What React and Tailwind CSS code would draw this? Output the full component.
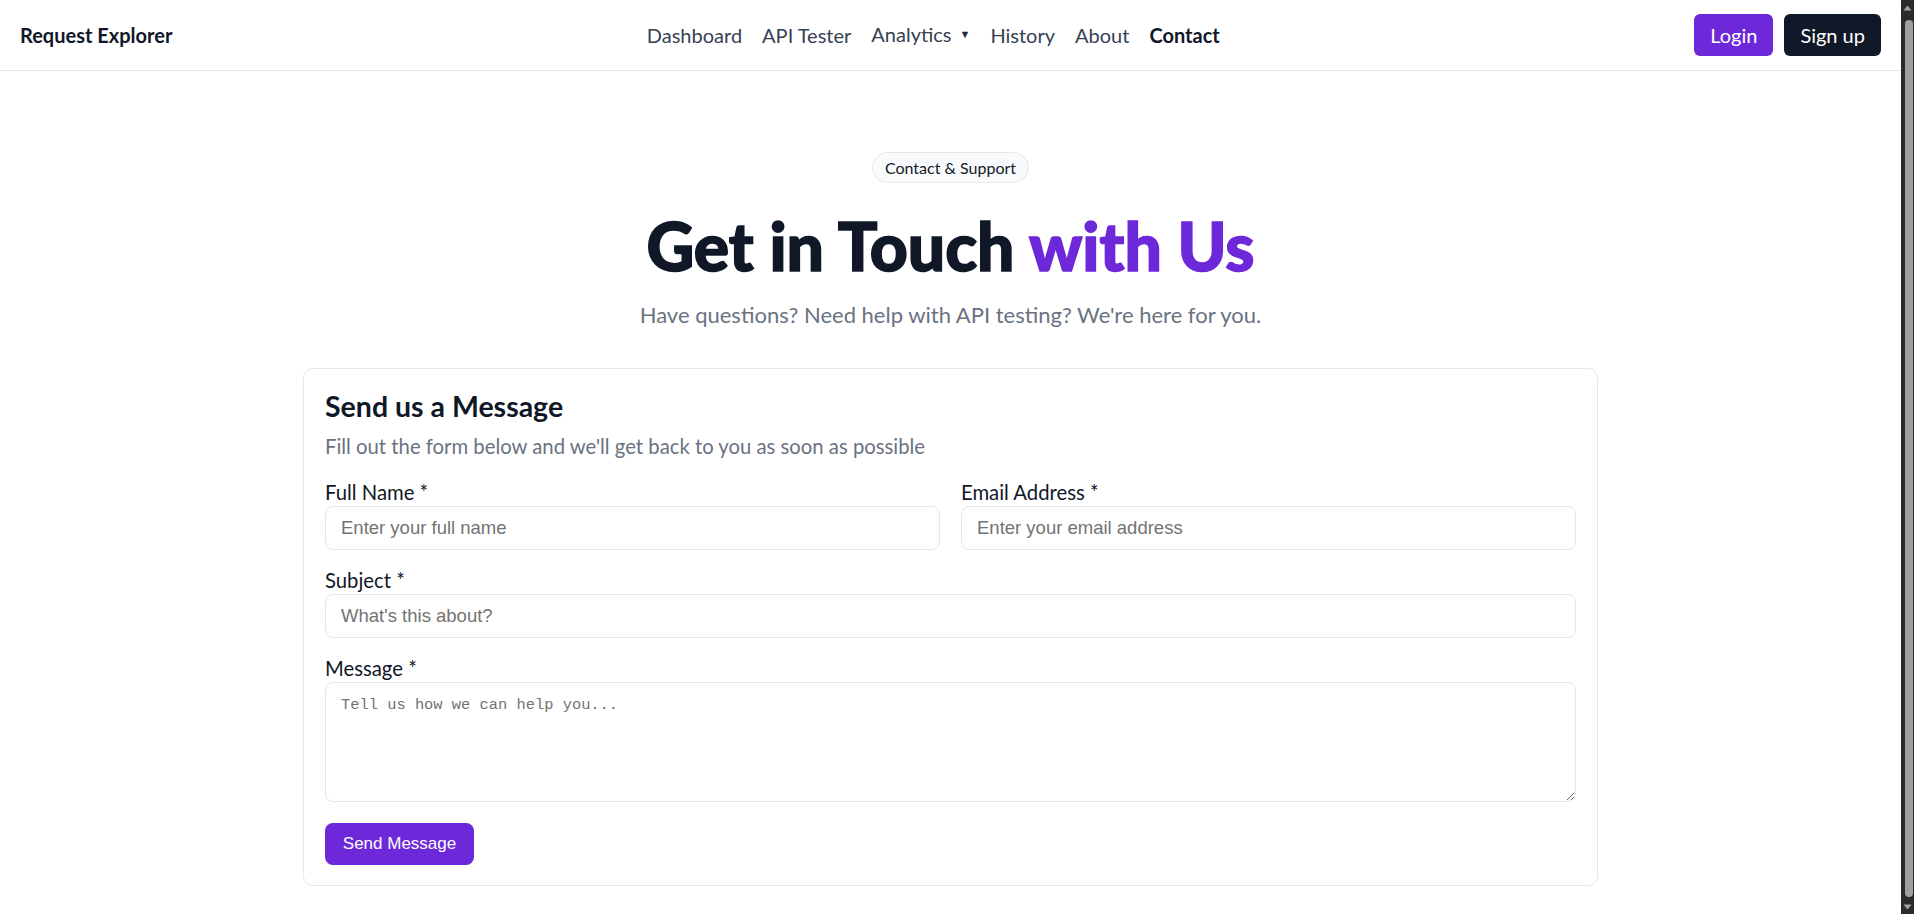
import React from "react";

const sans = { fontFamily: "Lato, 'Open Sans', sans-serif" };

function ScrollStrip() {
  return (
    <div className="w-[13px] shrink-0 h-screen bg-[#2b2b2b] flex flex-col items-center">
      <div className="h-[16px] w-full flex items-center justify-center">
        <svg width="9" height="6" viewBox="0 0 9 6">
          <path d="M4.5 0.5 L8.5 5.5 L0.5 5.5 Z" fill="#a3a3a3" />
        </svg>
      </div>
      <div className="mt-[4px] ml-[3px] w-[8px] h-[877px] rounded-[4px] bg-[#9f9f9f]" />
      <div className="mt-auto h-[14px] w-full flex items-center justify-center">
        <svg width="9" height="6" viewBox="0 0 9 6">
          <path d="M0.5 0.5 L8.5 0.5 L4.5 5.5 Z" fill="#a3a3a3" />
        </svg>
      </div>
    </div>
  );
}

const inputCls =
  "mt-px h-[44px] rounded-lg border border-gray-200 px-[15px] font-['Liberation_Sans',Arial,sans-serif] text-[18.5px] text-gray-900 placeholder:text-[#737373] outline-none";

export default function App() {
  return (
    <div className="flex h-screen overflow-hidden bg-white text-gray-900" style={sans}>
      <div className="flex-1 min-w-0 h-screen overflow-hidden">
        <nav className="h-[71px] border-b border-gray-200 px-5 flex items-center justify-between">
          <div className="font-bold text-[20px] text-gray-900">Request Explorer</div>
          <div className="flex items-center gap-5 text-[20px] text-gray-700">
            <a className="cursor-pointer">Dashboard</a>
            <a className="cursor-pointer">API Tester</a>
            <a className="cursor-pointer flex items-center gap-[8px] -mt-[2px]">
              Analytics
              <span className="text-[11px] text-gray-800">▼</span>
            </a>
            <a className="cursor-pointer">History</a>
            <a className="cursor-pointer">About</a>
            <a className="cursor-pointer font-bold text-gray-900">Contact</a>
          </div>
          <div className="flex items-center gap-[11px]">
            <button className="h-[42px] px-4 rounded-md bg-[#6d28d9] text-white text-[20px]">
              Login
            </button>
            <button className="h-[42px] px-4 rounded-md bg-[#111827] text-white text-[20px]">
              Sign up
            </button>
          </div>
        </nav>

        <main className="flex flex-col items-center pt-[81px] pb-10">
          <div className="h-[31px] px-3 flex items-center rounded-full border border-gray-200 bg-gray-50 text-[16px] text-gray-900">
            Contact &amp; Support
          </div>
          <h1 className="mt-[30px] text-[66px] leading-none font-black text-gray-900 [-webkit-text-stroke-width:1.5px]">
            Get in Touch <span className="text-[#6d28d9]">with Us</span>
          </h1>
          <p className="mt-[20px] text-[22px] leading-[31px] text-gray-500">
            Have questions? Need help with API testing? We're here for you.
          </p>

          <div className="mt-[38px] w-[1295px] rounded-[10px] border border-gray-200 px-[21px] pt-5 pb-5">
            <h2 className="text-[28.5px] leading-[35px] font-bold text-gray-900">Send us a Message</h2>
            <p className="mt-[7px] text-[20.3px] leading-[31px] text-gray-500">
              Fill out the form below and we'll get back to you as soon as possible
            </p>

            <form className="mt-[17px] flex flex-col" onSubmit={(e) => e.preventDefault()}>
              <div className="grid grid-cols-2 gap-x-[21px]">
                <div className="flex flex-col">
                  <label className="text-[20.3px] leading-[26px] text-gray-900">Full Name *</label>
                  <input className={inputCls} placeholder="Enter your full name" />
                </div>
                <div className="flex flex-col">
                  <label className="text-[20.3px] leading-[26px] text-gray-900">Email Address *</label>
                  <input className={inputCls} placeholder="Enter your email address" />
                </div>
              </div>

              <div className="mt-[17px] flex flex-col">
                <label className="text-[20.3px] leading-[26px] text-gray-900">Subject *</label>
                <input className={inputCls} placeholder="What's this about?" />
              </div>

              <div className="mt-[17px] flex flex-col">
                <label className="text-[20.3px] leading-[26px] text-gray-900">Message *</label>
                <textarea
                  className="mt-px h-[120px] rounded-lg border border-gray-200 px-[15px] py-[11px] font-['Liberation_Mono',monospace] text-[15.4px] text-gray-900 placeholder:text-[#737373] outline-none"
                  placeholder="Tell us how we can help you..."
                />
              </div>

              <div className="mt-[21px]">
                <button
                  type="submit"
                  className="h-[42px] w-[149px] rounded-lg bg-[#6d28d9] text-white font-['Liberation_Sans',Arial,sans-serif] text-[17px]"
                >
                  Send Message
                </button>
              </div>
            </form>
          </div>
        </main>
      </div>
      <ScrollStrip />
    </div>
  );
}
